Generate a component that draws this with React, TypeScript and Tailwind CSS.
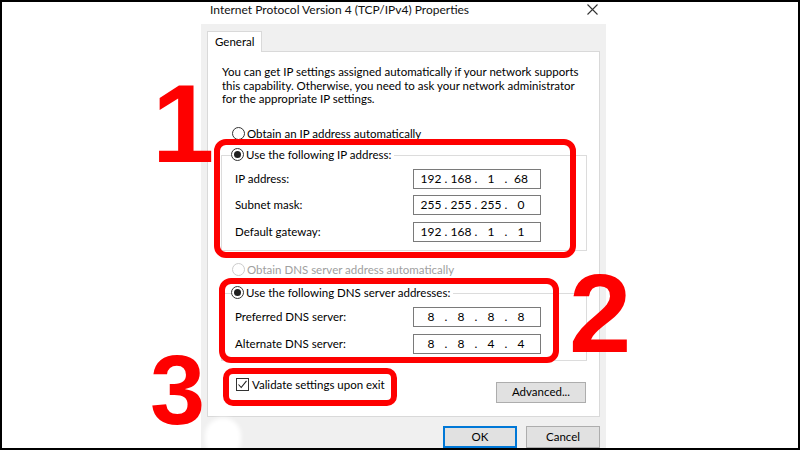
import React from "react";

function Radio({ checked, disabled }: { checked?: boolean; disabled?: boolean }) {
  return (
    <span
      className={`w-[13px] h-[13px] rounded-full border ${
        disabled ? "border-[#cccccc]" : "border-[#333333]"
      } bg-white flex items-center justify-center shrink-0`}
    >
      {checked && <span className="w-[7px] h-[7px] rounded-full bg-[#1f1f1f]" />}
    </span>
  );
}

function IpBox({ parts }: { parts: string[] }) {
  return (
    <div className="w-[128px] h-[20px] border border-[#7a7a7a] bg-white flex items-center pl-[4px] text-[12px] leading-[14px] text-black">
      {parts.map((p, i) => (
        <React.Fragment key={i}>
          <span className="w-[26px] text-center">{p}</span>
          {i < 3 && <span className="w-[4px] text-center">.</span>}
        </React.Fragment>
      ))}
    </div>
  );
}

function Field({ label, parts }: { label: string; parts: string[] }) {
  return (
    <div className="flex items-center justify-between h-[20px]">
      <span>{label}</span>
      <IpBox parts={parts} />
    </div>
  );
}

function GroupBox({
  legend,
  children,
  height,
}: {
  legend: string;
  children: React.ReactNode;
  height: string;
}) {
  return (
    <div className={`relative -ml-[1px] w-[366px] ${height} border border-[#dcdcdc] pl-[13px] pr-[45px] pt-[13px] flex flex-col`}>
      <div className="absolute -top-[9px] left-[9px] h-[16px] flex items-center gap-[2px] bg-white pr-[3px]">
        <Radio checked />
        <span>{legend}</span>
      </div>
      {children}
    </div>
  );
}

export default function App() {
  return (
    <div className="w-[800px] h-[450px] relative overflow-hidden bg-white border-2 border-black flex font-['Lato',sans-serif] text-[11.5px] leading-[14px] text-black">
      <div className="w-[199px] shrink-0" />
      <div className="w-[405px] shrink-0 flex flex-col">
        {/* title bar */}
        <div className="h-[22px] flex items-start justify-between pl-[9px] pr-[8px] pt-[1px]">
          <span className="text-[12px] leading-[14px] text-[#111]">
            Internet Protocol Version 4 (TCP/IPv4) Properties
          </span>
          <svg width="11" height="11" viewBox="0 0 11 11" className="mt-[1px]">
            <path d="M0.5 0.5 L10.5 10.5 M10.5 0.5 L0.5 10.5" stroke="#333" strokeWidth="1.1" fill="none" />
          </svg>
        </div>
        {/* body */}
        <div className="flex-1 bg-[#f0f0f0] px-[6px] pt-[7px] flex flex-col">
          <div className="w-[55px] h-[21px] bg-white border border-b-0 border-[#d9d9d9] flex items-center pl-[7px] relative z-10 -mb-px">
            General
          </div>
          <div className="w-[393px] h-[366px] bg-white border border-[#d9d9d9] pl-[14px] pt-[13px] flex flex-col">
            <p className="leading-[13.5px] whitespace-nowrap">
              You can get IP settings assigned automatically if your network supports
              <br />
              this capability. Otherwise, you need to ask your network administrator
              <br />
              for the appropriate IP settings.
            </p>
            <div className="mt-[20px] h-[16px] ml-[10px] flex items-center gap-[2px]">
              <Radio />
              <span>Obtain an IP address automatically</span>
            </div>
            <div className="mt-[13px]">
              <GroupBox legend="Use the following IP address:" height="h-[96px]">
                <div className="flex flex-col gap-[6.5px]">
                  <Field label="IP address:" parts={["192", "168", "1", "68"]} />
                  <Field label="Subnet mask:" parts={["255", "255", "255", "0"]} />
                  <Field label="Default gateway:" parts={["192", "168", "1", "1"]} />
                </div>
              </GroupBox>
            </div>
            <div className="mt-[11px] h-[16px] ml-[10px] flex items-center gap-[2px] text-[#a0a0a0]">
              <Radio disabled />
              <span>Obtain DNS server address automatically</span>
            </div>
            <div className="mt-[15px]">
              <GroupBox legend="Use the following DNS server addresses:" height="h-[68px]">
                <div className="flex flex-col gap-[7px]">
                  <Field label="Preferred DNS server:" parts={["8", "8", "8", "8"]} />
                  <Field label="Alternate DNS server:" parts={["8", "8", "4", "4"]} />
                </div>
              </GroupBox>
            </div>
            <div className="mt-[16px] flex items-start justify-between pr-[13px]">
              <div className="h-[16px] ml-[14px] flex items-center gap-[3px]">
                <span className="w-[13px] h-[13px] border border-[#333] bg-white flex items-center justify-center">
                  <svg width="11" height="11" viewBox="0 0 11 11">
                    <path d="M1.5 5.5 L4.2 8.5 L9.5 1.8" stroke="#222" strokeWidth="1.1" fill="none" />
                  </svg>
                </span>
                <span>Validate settings upon exit</span>
              </div>
              <button className="mt-[5px] w-[90px] h-[21px] bg-[#e1e1e1] border border-[#adadad] flex items-center justify-center">
                Advanced...
              </button>
            </div>
          </div>
          <div className="mt-[9px] flex justify-end gap-[9px] pr-[0px]">
            <button className="w-[74px] h-[22px] bg-[#e1e1e1] border-2 border-[#0078d7] flex items-center justify-center">
              OK
            </button>
            <button className="w-[74px] h-[22px] bg-[#e1e1e1] border border-[#adadad] flex items-center justify-center">
              Cancel
            </button>
          </div>
        </div>
      </div>
      <div className="flex-1" />

      {/* annotations */}
      <div className="absolute left-[212px] top-[137px] w-[362px] h-[119px] border-[6px] border-[#fe0000] rounded-[12px]" />
      <div className="absolute left-[217px] top-[276px] w-[340px] h-[85px] border-[6px] border-[#fe0000] rounded-[12px]" />
      <div className="absolute left-[221px] top-[366px] w-[174px] h-[38px] border-[6px] border-[#fe0000] rounded-[10px]" />

      <span className="absolute left-[150px] top-[66px] font-['Liberation_Sans',Arial,sans-serif] font-bold text-[112px] leading-[112px] text-[#fe0000]">
        1
      </span>
      <span className="absolute left-[567px] top-[256px] font-['Liberation_Sans',Arial,sans-serif] font-bold text-[112px] leading-[112px] text-[#fe0000]">
        2
      </span>
      <span className="absolute left-[148px] top-[338px] font-['Liberation_Sans',Arial,sans-serif] font-bold text-[99px] leading-[99px] text-[#fe0000]">
        3
      </span>
      <div className="absolute left-[203px] top-[416px] w-[36px] h-[40px] rounded-full bg-white blur-[2px]" />
    </div>
  );
}
